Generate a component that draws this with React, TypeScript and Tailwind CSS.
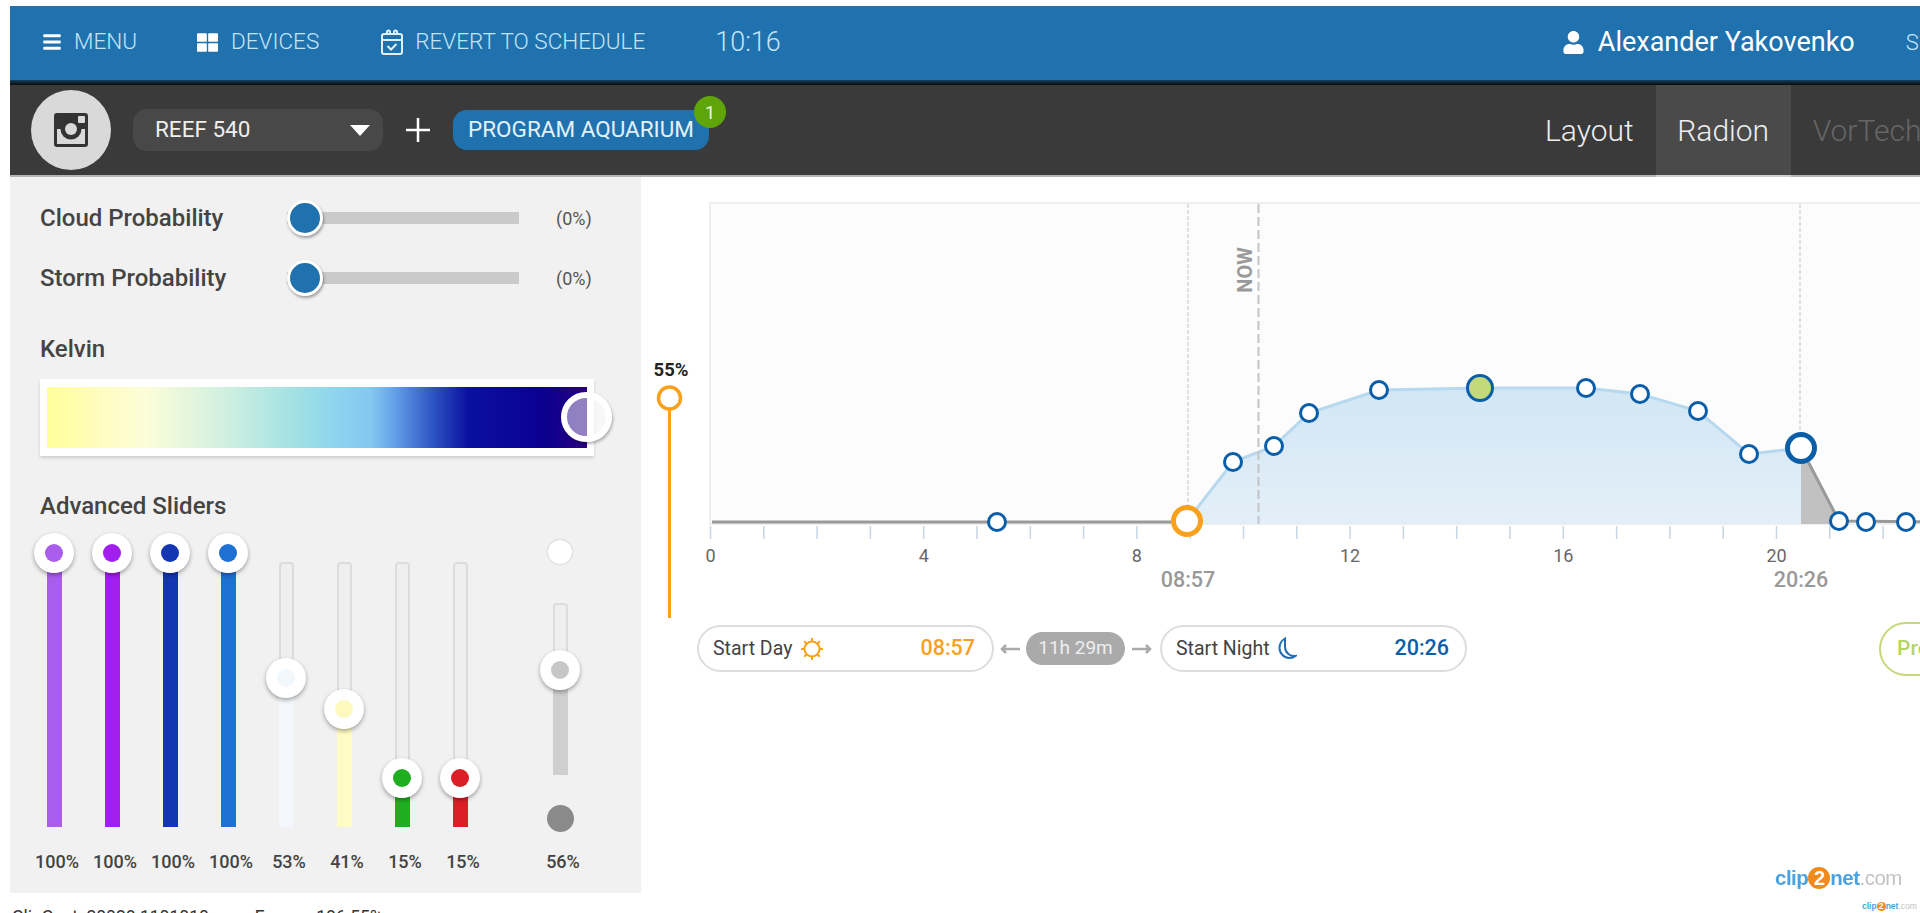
import React from 'react';
import { FaBars, FaThLarge, FaUser } from 'react-icons/fa';

const font = { fontFamily: 'Roboto, sans-serif' };

const channels = [
  { value: 100, fill: 'bg-[#a95deb]', dot: 'bg-[#a95deb]' },
  { value: 100, fill: 'bg-[#a11eee]', dot: 'bg-[#a11eee]' },
  { value: 100, fill: 'bg-[#1536b3]', dot: 'bg-[#1536b3]' },
  { value: 100, fill: 'bg-[#1f70d3]', dot: 'bg-[#1f70d3]' },
  { value: 53, fill: 'bg-[#f3f7fb]', dot: 'bg-[#f3f8fd]' },
  { value: 41, fill: 'bg-[#fefcc4]', dot: 'bg-[#fdf9bd]' },
  { value: 15, fill: 'bg-[#1fae1f]', dot: 'bg-[#1fae1f]' },
  { value: 15, fill: 'bg-[#dc1f26]', dot: 'bg-[#dc1f26]' },
];

const points = [
  [997, 522], [1233, 462], [1274, 446], [1309, 413], [1379, 390], [1586, 388],
  [1640, 394], [1698, 411], [1749, 454], [1839, 521], [1866, 522], [1906, 522],
];

const hour = (h: number) => 710.5 + 53.3 * h;

const InstaIcon = () => (
  <svg width="34" height="34" viewBox="0 0 34 34">
    <rect x="0" y="0" width="34" height="34" rx="3" fill="#333" />
    <rect x="3" y="16" width="28" height="15" fill="#d9d9d9" />
    <circle cx="17" cy="16" r="10.500" fill="#333" />
    <circle cx="17" cy="16" r="6" fill="#d9d9d9" />
    <rect x="24" y="3" width="7" height="7" rx="1" fill="#d9d9d9" />
  </svg>
);

const CalendarIcon = () => (
  <svg width="22" height="26" viewBox="0 0 22 26" fill="none" stroke="#dff0fb" strokeWidth="2" className="ml-[62px] shrink-0">
    <rect x="1" y="5" width="20" height="20" rx="2" />
    <path d="M1 11h20" />
    <path d="M6 6V3a1.500 1.500 0 0 1 3 0v3M13 6V3a1.500 1.500 0 0 1 3 0v3" />
    <path d="M6.500 17l3.500 3.500 5.500-5.500" />
  </svg>
);

const SunIcon = () => (
  <svg width="24" height="24" viewBox="0 0 24 24" fill="none" stroke="#f9a11b" strokeWidth="2">
    <circle cx="12" cy="12" r="7.500" />
    {[0, 45, 90, 135, 180, 225, 270, 315].map((a) => (
      <path key={a} d="M12 1v3" transform={`rotate(${a} 12 12)`} />
    ))}
  </svg>
);

const MoonIcon = () => (
  <svg width="19" height="23" viewBox="0 0 19 23" fill="none" stroke="#1f6db5" strokeWidth="2">
    <path d="M7 1.500C3.500 3.500 1.500 7 1.500 11c0 5.500 4.500 10 10 10 2.500 0 4.500-.8 6-2-5 .5-10.500-3-10.500-9 0-3 0-6 0-8.500z" />
  </svg>
);

const Arrow = ({ flip }: { flip?: boolean }) => (
  <svg width="20" height="10" viewBox="0 0 20 10" fill="none" stroke="#aaa" strokeWidth="2.500" className={flip ? 'shrink-0 rotate-180' : 'shrink-0'}>
    <path d="M20 5H2M6 1L2 5l4 4" />
  </svg>
);

const ProbabilityRow = ({ label }: { label: string }) => (
  <div className="ml-[30px] flex h-9 items-center">
    <div className="w-[247px] text-[24px] font-medium text-[#444]">{label}</div>
    <div className="relative h-3 w-[232px] bg-[#cacaca]">
      <div className="absolute left-0 top-[-12px] h-9 w-9 rounded-full border-[3px] border-white bg-[#1f72ae] shadow-[1px_2px_3px_rgba(0,0,0,0.35)]" />
    </div>
    <div className="ml-[37px] text-[18px] text-[#555]">(0%)</div>
  </div>
);

const ChannelSlider = ({ value, fill, dot }: { value: number; fill: string; dot: string }) => {
  const handleTop = (100 - value) * 2.65 - 10;
  return (
    <div className="flex w-[58px] shrink-0 flex-col items-center">
      <div className="relative mt-[40px] h-[265px] w-[15px] rounded-sm border-2 border-[#dcdcdc] bg-[#efefef]">
        <div
          className={`absolute bottom-[-2px] left-[-2px] right-[-2px] ${fill}`}
          style={{ height: 265 - handleTop - 20 }}
        />
        <div
          className="absolute left-[-15px] flex h-10 w-10 items-center justify-center rounded-full bg-white shadow-[0_2px_4px_rgba(0,0,0,0.35)]"
          style={{ top: handleTop - 21 }}
        >
          <div className={`h-[18px] w-[18px] rounded-full ${dot}`} />
        </div>
      </div>
      <div className="mt-[23px] pl-[6px] text-[18px] font-medium leading-6 text-[#444]">{value}%</div>
    </div>
  );
};

const Chart = () => (
  <svg width="1279" height="448" viewBox="641 177 1279 448" className="block shrink-0" style={font}>
    <defs>
      <linearGradient id="area" x1="0" y1="0" x2="0" y2="1">
        <stop offset="0" stopColor="#d2e6f4" />
        <stop offset="1" stopColor="#e3eff8" />
      </linearGradient>
    </defs>
    <rect x="710" y="203" width="1230" height="321" fill="#fcfcfc" stroke="#eeeeee" strokeWidth="2" />

    {Array.from({ length: 24 }, (_, h) => (
      <line key={h} x1={hour(h)} x2={hour(h)} y1="526" y2="539" stroke="#c5d6e6" strokeWidth="1.500" />
    ))}
    {[0, 4, 8, 12, 16, 20].map((h) => (
      <text key={h} x={hour(h)} y="562" textAnchor="middle" fontSize="18" fill="#666">{h}</text>
    ))}
    <text x="1188" y="587" textAnchor="middle" fontSize="21.500" fontWeight="500" fill="#999">08:57</text>
    <text x="1801" y="587" textAnchor="middle" fontSize="21.500" fontWeight="500" fill="#999">20:26</text>

    <line x1="1188" x2="1188" y1="204" y2="523" stroke="#c4c4c4" strokeWidth="1" strokeDasharray="4 2" />
    <line x1="1800" x2="1800" y1="204" y2="448" stroke="#c4c4c4" strokeWidth="1" strokeDasharray="4 2" />

    <path
      d="M1187 524 L1233 462 L1274 446 L1309 413 L1379 390 L1480 388 L1586 388 L1640 394 L1698 411 L1749 454 L1801 448 L1801 524 Z"
      fill="url(#area)"
    />
    <path
      d="M1187 521 L1233 462 L1274 446 L1309 413 L1379 390 L1480 388 L1586 388 L1640 394 L1698 411 L1749 454 L1801 448"
      fill="none"
      stroke="#b7d9ef"
      strokeWidth="3"
    />
    <path d="M1801 448 L1839 521 L1839 524 L1801 524 Z" fill="#c1c1c1" />
    <path d="M1801 448 L1839 521 L1940 522" fill="none" stroke="#999" strokeWidth="3" />
    <line x1="712" x2="1187" y1="522" y2="522" stroke="#999" strokeWidth="3" />

    <line x1="1258.500" x2="1258.500" y1="204" y2="524" stroke="#c4c4c4" strokeWidth="2" strokeDasharray="9 4" />
    <text
      x="1252"
      y="270"
      transform="rotate(-90 1252 270)"
      textAnchor="middle"
      fontSize="20"
      fontWeight="700"
      fill="#999"
    >
      NOW
    </text>

    {points.map(([x, y]) => (
      <circle key={x} cx={x} cy={y} r="8.500" fill="white" stroke="#0a5ea8" strokeWidth="3" />
    ))}
    <circle cx="1480" cy="388" r="12.500" fill="#c4d97a" stroke="#0a5ea8" strokeWidth="3" />
    <circle cx="1801" cy="448" r="13.500" fill="white" stroke="#0a5ea8" strokeWidth="5" />
    <circle cx="1187" cy="521" r="13.500" fill="white" stroke="#f9a11b" strokeWidth="5" />

    <line x1="669.500" x2="669.500" y1="398" y2="618" stroke="#f9a11b" strokeWidth="3" />
    <circle cx="669.500" cy="398" r="11" fill="white" stroke="#f9a11b" strokeWidth="3.500" />
    <text x="671" y="376" textAnchor="middle" fontSize="18.500" fontWeight="700" fill="#222">55%</text>
  </svg>
);

const App = () => {
  return (
    <div className="flex h-[913px] w-[1920px] flex-col overflow-hidden bg-white pl-[10px] pt-[6px]" style={font}>
      {/* Top bar */}
      <div className="flex h-[74px] shrink-0 items-center overflow-hidden whitespace-nowrap bg-[#1f72ae] pb-[2px] text-[22.500px] font-light text-[#c4e4f8]">
        <FaBars className="ml-[32px] shrink-0 text-white" size={20} />
        <span className="ml-[12px]">MENU</span>
        <FaThLarge className="ml-[60px] shrink-0 text-white" size={21} />
        <span className="ml-[13px]">DEVICES</span>
        <CalendarIcon />
        <span className="ml-[12px]">REVERT TO SCHEDULE</span>
        <span className="ml-[70px] text-[27px]">10:16</span>
        <FaUser className="ml-[781px] shrink-0 text-white" size={23} />
        <span className="ml-[13px] text-[27px] font-normal text-white">Alexander Yakovenko</span>
        <span className="ml-[51px] text-[22px]">SIGN OUT</span>
      </div>
      <div className="h-[5px] shrink-0 bg-gradient-to-b from-[#0f4263] to-[#0a0a0a]" />

      {/* Aquarium bar */}
      <div className="flex h-[90px] shrink-0 items-center overflow-hidden whitespace-nowrap bg-[#3a3a3a] text-white">
        <div className="ml-[21px] flex h-20 w-20 shrink-0 items-center justify-center rounded-full bg-[#d9d9d9]">
          <InstaIcon />
        </div>
        <div className="ml-[22px] flex h-[42px] w-[250px] shrink-0 items-center justify-between rounded-[14px] bg-[#484848] pl-[22px] pr-[13px] text-[22.500px] text-[#eeeeee]">
          <span>REEF 540</span>
          <span className="h-0 w-0 border-x-[10px] border-t-[11px] border-x-transparent border-t-white" />
        </div>
        <svg width="24" height="24" viewBox="0 0 24 24" className="ml-[23px] shrink-0" stroke="white" strokeWidth="2.500">
          <path d="M12 0v24M0 12h24" />
        </svg>
        <div className="relative ml-[23px] flex h-10 w-[256px] shrink-0 items-center justify-center rounded-[14px] bg-[#1f72ae] text-[22.500px] text-[#e3f1fa]">
          PROGRAM AQUARIUM
          <div className="absolute right-[-17px] top-[-14px] flex h-8 w-8 items-center justify-center rounded-full bg-[#5fa50a] text-[18px] text-[#eef7dd]">
            1
          </div>
        </div>
        <div className="ml-[836px] text-[30px] font-light text-[#eeeeee]">Layout</div>
        <div className="ml-[22px] flex h-full w-[135px] shrink-0 items-center justify-center bg-[#4a4a4a] text-[30px] font-light text-[#eeeeee]">
          Radion
        </div>
        <div className="ml-[22px] text-[30px] font-light text-[#666]">VorTech</div>
      </div>
      <div className="flex h-[2px] shrink-0">
        <div className="w-[1646px] bg-[#b5b5b5]" />
        <div className="w-[135px] bg-[#d0d0d0]" />
        <div className="flex-1 bg-[#b5b5b5]" />
      </div>

      <div className="flex min-h-0 flex-1">
        {/* Left panel */}
        <div className="h-[716px] w-[631px] shrink-0 bg-[#f1f1f1] pt-[23px]">
          <ProbabilityRow label="Cloud Probability" />
          <div className="mt-6">
            <ProbabilityRow label="Storm Probability" />
          </div>
          <div className="ml-[30px] mt-[39px] text-[24px] font-medium leading-7 text-[#444]">Kelvin</div>
          <div className="relative ml-[30px] mt-4 h-[77px] w-[554px] bg-white px-[7px] py-2 shadow-[0_2px_3px_rgba(0,0,0,0.15)]">
            <div className="h-[61px] w-full bg-[linear-gradient(to_right,#ffff99_0%,#fffcc0_10%,#fdfdd8_18%,#d0f0e0_33%,#a5e2e2_45%,#8ed6ee_53%,#82c8f0_60%,#66a4ea_64%,#3058c6_71%,#0a10a0_78%,#0a0090_92%,#2a0080_100%)]" />
            <div className="absolute left-[521px] top-[13px] h-[50px] w-[51px] rounded-full border-[6px] border-white bg-white/50 shadow-[1px_2px_3px_rgba(0,0,0,0.3)]" />
          </div>
          <div className="ml-[30px] mt-9 text-[24px] font-medium leading-7 text-[#444]">Advanced Sliders</div>

          <div className="ml-[15px] mt-[2px] flex">
            {channels.map((c, i) => (
              <ChannelSlider key={i} {...c} />
            ))}
            {/* Master slider */}
            <div className="ml-[42px] flex w-[58px] shrink-0 flex-col items-center">
              <div className="mt-[18px] h-6 w-6 rounded-full bg-white shadow-[0_0_3px_rgba(0,0,0,0.2)]" />
              <div className="relative mt-[39px] h-[172px] w-[15px] rounded-sm border-2 border-[#dcdcdc] bg-[#efefef]">
                <div className="absolute bottom-[-2px] left-[-2px] right-[-2px] top-[85px] bg-[#cfcfcf]" />
                <div className="absolute left-[-15px] top-[45px] flex h-10 w-10 items-center justify-center rounded-full bg-white shadow-[0_2px_4px_rgba(0,0,0,0.35)]">
                  <div className="h-[18px] w-[18px] rounded-full bg-[#c6c6c6]" />
                </div>
              </div>
              <div className="mt-[30px] h-[27px] w-[27px] rounded-full bg-[#8a8a8a]" />
              <div className="mt-[18px] pl-[6px] text-[18px] font-medium leading-6 text-[#444]">56%</div>
            </div>
          </div>
        </div>

        {/* Schedule */}
        <div className="relative flex-1">
          <Chart />
          <div className="flex h-[47px] items-center whitespace-nowrap pl-[56px]">
            <div className="flex h-[47px] w-[297px] shrink-0 items-center rounded-full border-2 border-[#dddddd] bg-white pl-[14px] pr-[17px] text-[19.500px] text-[#444]">
              <span>Start Day</span>
              <span className="ml-2 shrink-0"><SunIcon /></span>
              <span className="ml-auto text-[21.500px] font-medium text-[#f9a11b]">08:57</span>
            </div>
            <span className="ml-[6px]"><Arrow /></span>
            <div className="ml-[6px] flex h-[33px] w-[99px] shrink-0 items-center justify-center rounded-full bg-[#aaaaaa] text-[19px] text-[#eeeeee]">
              11h 29m
            </div>
            <span className="ml-[7px]"><Arrow flip /></span>
            <div className="ml-2 flex h-[47px] w-[307px] shrink-0 items-center rounded-full border-2 border-[#dddddd] bg-white pl-[14px] pr-[16px] text-[19.500px] text-[#444]">
              <span>Start Night</span>
              <span className="ml-2 shrink-0"><MoonIcon /></span>
              <span className="ml-auto text-[21.500px] font-medium text-[#0a5ea8]">20:26</span>
            </div>
            <div className="ml-[412px] flex h-[54px] w-[140px] shrink-0 items-center rounded-full border-2 border-[#c4d97a] pl-4 text-[21px] font-medium text-[#b5d36a]">
              Preview
            </div>
          </div>

          {/* Watermark */}
          <div
            className="absolute left-[1134px] top-[686px] flex items-center text-[20.500px] font-bold tracking-tight text-[#4aa3e0] blur-[0.6px]"
            style={{ fontFamily: '"Liberation Sans", sans-serif' }}
          >
            clip
            <span className="flex h-[22px] w-[22px] items-center justify-center rounded-full bg-[#f08a1d] text-white">2</span>
            net
            <span className="font-normal text-[#c2c2c2]">.com</span>
          </div>
          <div
            className="absolute left-[1221px] top-[723px] flex items-center text-[8.500px] font-bold text-[#4aa3e0]"
            style={{ fontFamily: '"Liberation Sans", sans-serif' }}
          >
            clip
            <span className="flex h-[9px] w-[9px] items-center justify-center rounded-full bg-[#f08a1d] text-white">2</span>
            net
            <span className="font-normal text-[#c2c2c2]">.com</span>
          </div>
        </div>
      </div>

      {/* Footer sliver */}
      <div className="ml-[2px] flex h-[2px] shrink-0 overflow-visible whitespace-nowrap text-[17.500px] leading-3 text-[#333]">
        <span>ClipCost: 20028 1101010</span>
        <span className="ml-[46px]">Energy: 186.55%</span>
      </div>
    </div>
  );
};

export default App;
